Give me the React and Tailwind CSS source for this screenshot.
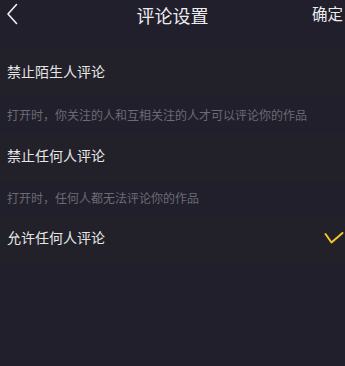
export default function App() {
  const font = { fontFamily: '"Noto Sans CJK SC", "Noto Sans", sans-serif' };
  return (
    <div className="w-[345px] h-[366px] bg-[#201f2b] overflow-hidden" style={font}>
      <div className="relative h-[30px] flex items-center justify-center">
        <svg className="absolute left-[6px] top-[3px]" width="12" height="22" viewBox="0 0 12 22" fill="none">
          <path d="M10.5 1.5 L2 11 L10.5 20.5" stroke="#f2f2f2" strokeWidth="1.6" strokeLinecap="round" strokeLinejoin="round" />
        </svg>
        <span className="text-[18px] leading-none text-[#ececee]">评论设置</span>
        <span className="absolute right-[2px] top-[6px] text-[15.5px] leading-none text-[#ececee]">确定</span>
      </div>
      <div className="h-[19px]" />
      <div className="h-[48px] bg-[#222129] flex items-center pl-[7px] pb-[3px] text-[14px] text-[#e6e6e8]">禁止陌生人评论</div>
      <div className="h-[36px] flex items-center pl-[7px] pb-[1px] text-[12px] text-[#6c6b74]">打开时，你关注的人和互相关注的人才可以评论你的作品</div>
      <div className="h-[48px] bg-[#222129] flex items-center pl-[7px] pb-[3px] text-[14px] text-[#e6e6e8]">禁止任何人评论</div>
      <div className="h-[34px] flex items-center pl-[7px] text-[12px] text-[#6c6b74]">打开时，任何人都无法评论你的作品</div>
      <div className="h-[48px] bg-[#222129] flex items-center justify-between pl-[7px] pr-[1px] pb-[3px] text-[14px] text-[#e6e6e8]">
        <span>允许任何人评论</span>
        <svg width="20" height="14" viewBox="0 0 20 14" fill="none">
          <path d="M1.5 3 L7.5 11.5 L18.5 2" stroke="#f7c52b" strokeWidth="2" strokeLinecap="round" strokeLinejoin="round" />
        </svg>
      </div>
    </div>
  );
}
